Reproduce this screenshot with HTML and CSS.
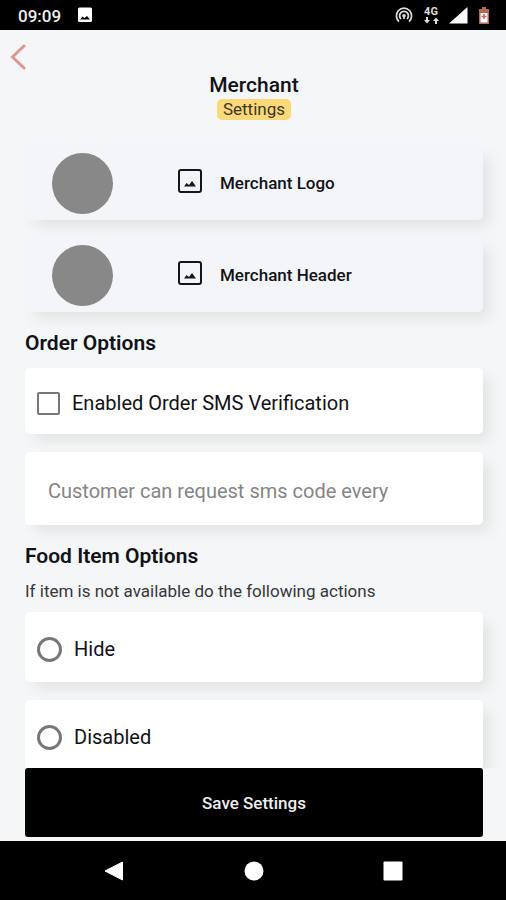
FILE: index.html
```html
<!DOCTYPE html>
<html lang="en">
<head>
<meta charset="utf-8">
<meta name="viewport" content="width=device-width, initial-scale=1">
<title>Merchant Settings</title>
<link rel="stylesheet" href="styles.css">
</head>
<body>
<div class="status-bar">
  <span class="clock">09:09</span>
  <svg class="status-picture" width="16" height="16" viewBox="0 0 16 16" aria-hidden="true"><rect x="1" y="0.500" width="14" height="14.500" rx="1.500" fill="#fff"/><path d="M3 12.500l2.500-3 2 1.500 2.500-2 3 3.500z" fill="#000"/></svg>
  <span class="status-icons">
    <svg width="18" height="18" viewBox="0 0 18 18" fill="none" stroke="#ddd" stroke-width="1.700" aria-hidden="true"><path d="M4 15.500a7.600 7.600 0 1 1 10 0M6 13a4.400 4.400 0 1 1 6 0"/><circle cx="9" cy="9.700" r="1.800" fill="#ddd" stroke="none"/><path d="M9 10v3"/></svg>
    <span class="network"><span>4G</span><svg width="16" height="7" viewBox="0 0 16 7" fill="#ddd" aria-hidden="true"><path d="M3 0h2v3h2L4 6.500 1 3h2zM12 7h2V4h2l-3-3.500L10 4h2z"/></svg></span>
    <svg width="19" height="17" viewBox="0 0 19 17" aria-hidden="true"><path d="M18.500 0v16.500H0z" fill="#fff"/></svg>
    <svg class="battery" width="12" height="17" viewBox="0 0 12 17" aria-hidden="true"><path d="M4 0h4v2h3v15H1V2h3z" fill="#b5675a"/><path d="M2.500 6h7v9.500h-7z" fill="#fff"/><path d="M6 7v5M3.500 9.500h5" stroke="#d9604c" stroke-width="1.500"/></svg>
  </span>
</div>
<main class="screen">
  <button class="back" type="button" aria-label="Back"><svg width="16" height="26" viewBox="0 0 16 26" fill="none" stroke="#e09494" stroke-width="3" stroke-linecap="round" aria-hidden="true"><path d="M14 2L2.500 13 14 24"/></svg></button>
  <header class="page-title">
    <h1>Merchant</h1>
    <span class="badge">Settings</span>
  </header>
  <div class="stack">
    <button class="card upload" type="button">
      <span class="avatar"></span>
      <svg class="picture" width="24" height="24" viewBox="0 0 24 24" aria-hidden="true"><rect x="1" y="1" width="22" height="22" rx="2" fill="none" stroke="#15161b" stroke-width="2"/><path d="M6 17.500l2.500-3.500 2.500 2 3-4 4 5.500z" fill="#15161b"/></svg>
      <span>Merchant Logo</span>
    </button>
    <button class="card upload" type="button">
      <span class="avatar"></span>
      <svg class="picture" width="24" height="24" viewBox="0 0 24 24" aria-hidden="true"><rect x="1" y="1" width="22" height="22" rx="2" fill="none" stroke="#15161b" stroke-width="2"/><path d="M6 17.500l2.500-3.500 2.500 2 3-4 4 5.500z" fill="#15161b"/></svg>
      <span>Merchant Header</span>
    </button>
  </div>
  <h2>Order Options</h2>
  <div class="stack">
    <label class="card choice check"><input type="checkbox"><span>Enabled Order SMS Verification</span></label>
    <input class="card field" type="text" placeholder="Customer can request sms code every" aria-label="Customer can request sms code every">
  </div>
  <h2>Food Item Options</h2>
  <p class="hint">If item is not available do the following actions</p>
  <div class="stack">
    <label class="card choice"><input type="radio" name="unavailable"><span>Hide</span></label>
    <label class="card choice"><input type="radio" name="unavailable"><span>Disabled</span></label>
  </div>
</main>
<div class="save-bar"><button class="save" type="button">Save Settings</button></div>
<nav class="system-nav">
  <button type="button" aria-label="Back"><svg width="20" height="20" viewBox="0 0 20 20" aria-hidden="true"><path d="M18.500 1v18L1 10z" fill="#fff" stroke="#fff" stroke-linejoin="round"/></svg></button>
  <button type="button" aria-label="Home"><svg width="20" height="20" viewBox="0 0 20 20" aria-hidden="true"><circle cx="10" cy="10" r="9.500" fill="#fff"/></svg></button>
  <button type="button" aria-label="Recent apps"><svg width="20" height="20" viewBox="0 0 20 20" aria-hidden="true"><rect x="0.500" y="0.500" width="19" height="19" rx="1" fill="#fff"/></svg></button>
</nav>
</body>
</html>
```
FILE: styles.css
```css
* { box-sizing: border-box; }

body {
  margin: 0;
  height: 100vh;
  display: flex;
  flex-direction: column;
  background: #f5f6f8;
  color: #111216;
  font-family: Roboto, "Liberation Sans", sans-serif;
}

button, input { font: inherit; color: inherit; }
button { border: 0; padding: 0; }
svg { display: block; flex: none; }

.status-bar {
  flex: none;
  height: 30px;
  padding: 0 16px 0 18px;
  display: flex;
  align-items: center;
  background: #000;
  color: #eee;
}
.clock { padding-top: 2px; font-size: 17px; font-weight: 500; line-height: 20px; }
.status-picture { margin-left: 16px; }
.status-icons { margin-left: auto; display: flex; align-items: center; gap: 10px; }
.network {
  display: flex;
  flex-direction: column;
  align-items: center;
  font-size: 11px;
  font-weight: 700;
  line-height: 10px;
  color: #ddd;
}

.screen {
  flex: 1;
  min-height: 0;
  padding: 14px 23px 0 25px;
  overflow-y: auto;
  scrollbar-width: none;
}
.back {
  display: block;
  margin-left: -15px;
  background: none;
}
.page-title {
  margin: 2px 0 26px;
  display: flex;
  flex-direction: column;
  align-items: center;
}
h1, h2, p { margin: 0; }
h1, h2 { font-size: 21px; line-height: 24px; }
h1 { font-weight: 500; line-height: 27px; }
h2 { margin: 19px 0 13px; font-weight: 600; }
.badge {
  padding: 0 6px;
  border-radius: 5px;
  background: #fbd978;
  color: #3d3523;
  font-size: 17px;
  line-height: 21px;
}

.stack { display: flex; flex-direction: column; gap: 18px; }
.card {
  width: 100%;
  border: 0;
  border-radius: 5px;
  background: #fff;
  box-shadow: 8px 8px 14px -2px #e1e3e2;
}
.upload {
  height: 74px;
  padding: 0 27px;
  display: flex;
  align-items: center;
  background: #f4f5f9;
  font-size: 17px;
  font-weight: 500;
}
.avatar {
  width: 61px;
  height: 61px;
  margin-right: 65px;
  border-radius: 50%;
  background: #888;
}
.picture { margin: 0 18px 5px 0; }

.choice {
  height: 70px;
  padding: 4px 12px 0;
  display: flex;
  align-items: center;
  gap: 12px;
  font-size: 20px;
}
.check { height: 66px; }
.choice input {
  appearance: none;
  width: 25px;
  height: 25px;
  margin: 0;
  border: 3px solid #777;
  border-radius: 50%;
  background: #fff;
}
.choice input:checked { background: #777; }
.check input {
  width: 23px;
  height: 23px;
  border-width: 2px;
  border-radius: 2px;
}
.field {
  height: 73px;
  padding: 4px 23px 0;
  font-size: 20px;
}
.field::placeholder { color: #858585; opacity: 1; }
.hint {
  margin: -2px 0 9px;
  color: #36373b;
  font-size: 17px;
  line-height: 24px;
}

.save-bar { position: relative; flex: none; padding: 0 23px 4px 25px; }
.save {
  display: block;
  width: 100%;
  height: 69px;
  border-radius: 3px;
  background: #000;
  color: #eee;
  font-size: 17px;
  font-weight: 500;
}

.system-nav {
  flex: none;
  height: 59px;
  padding: 0 43px 0 44px;
  display: flex;
  align-items: center;
  background: #000;
}
.system-nav button {
  flex: 1;
  display: flex;
  justify-content: center;
  background: none;
}
```
